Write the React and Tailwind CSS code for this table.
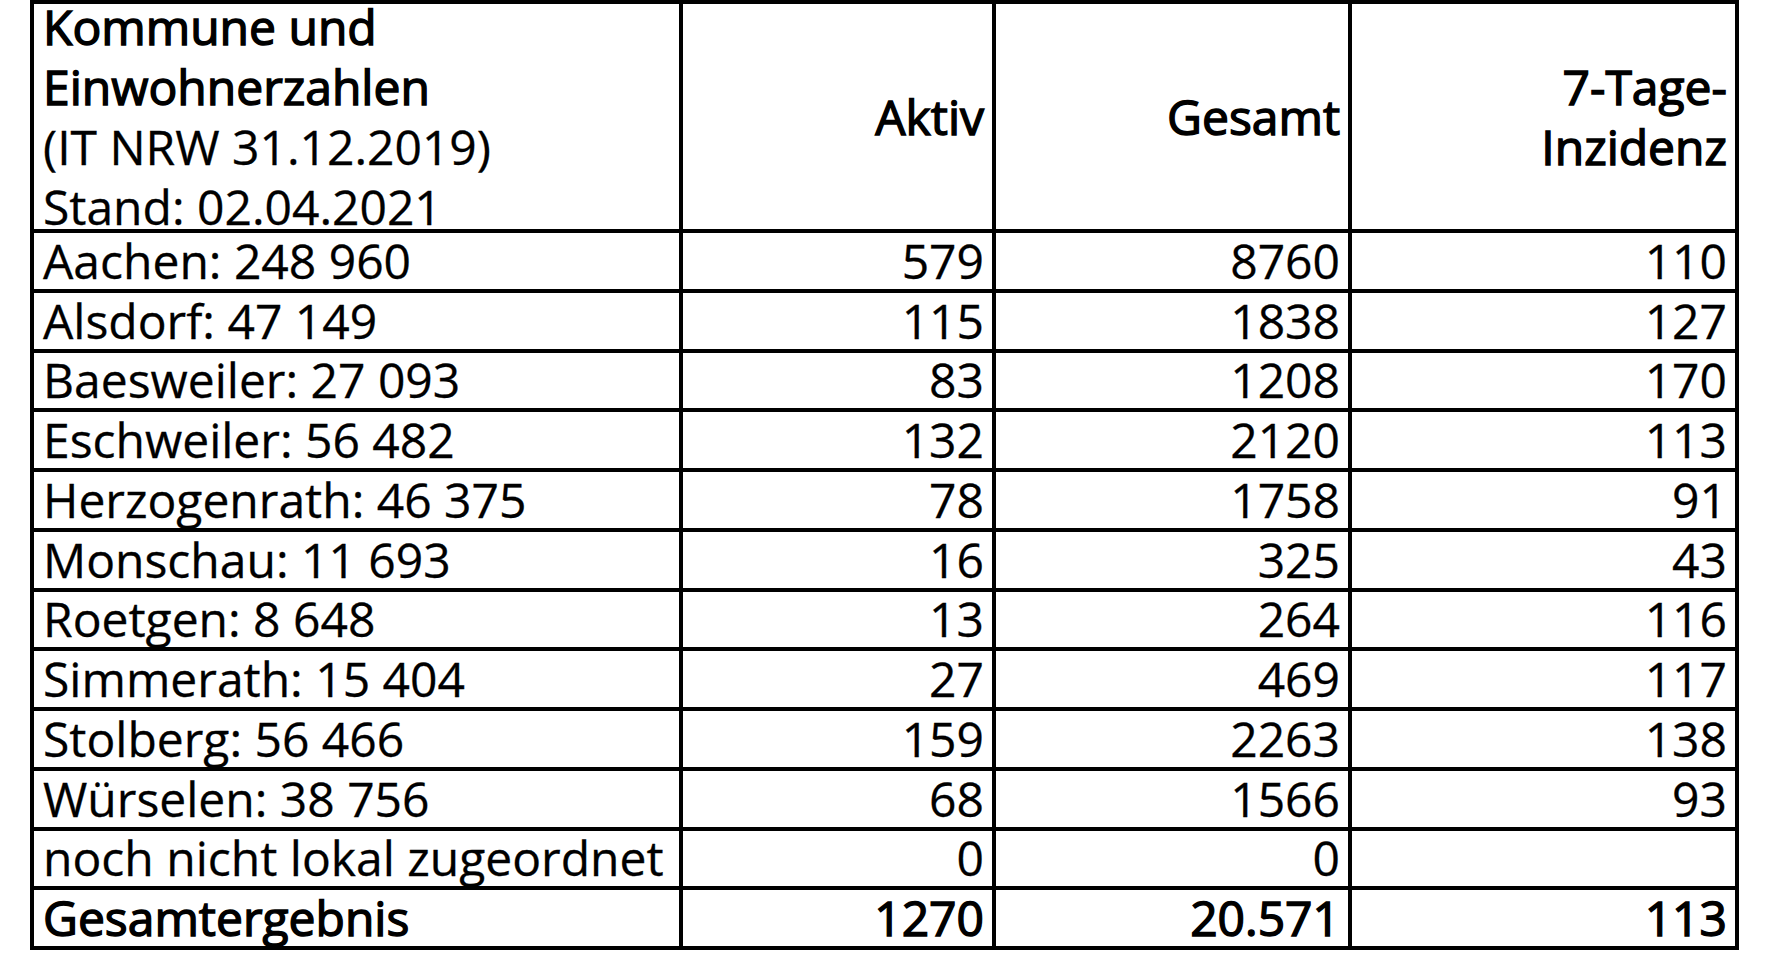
import React from "react";

const rows = [
  ["Aachen: 248 960", "579", "8760", "110"],
  ["Alsdorf: 47 149", "115", "1838", "127"],
  ["Baesweiler: 27 093", "83", "1208", "170"],
  ["Eschweiler: 56 482", "132", "2120", "113"],
  ["Herzogenrath: 46 375", "78", "1758", "91"],
  ["Monschau: 11 693", "16", "325", "43"],
  ["Roetgen: 8 648", "13", "264", "116"],
  ["Simmerath: 15 404", "27", "469", "117"],
  ["Stolberg: 56 466", "159", "2263", "138"],
  ["Würselen: 38 756", "68", "1566", "93"],
  ["noch nicht lokal zugeordnet", "0", "0", ""],
];

const BOLD = "[-webkit-text-stroke:1.4px_black]";
const REG = "[-webkit-text-stroke:0.3px_black]";

function Cell({ children, right, bold }) {
  return (
    <div
      className={
        "bg-white flex items-center whitespace-nowrap leading-[60px] " +
        (right ? "justify-end pr-2 text-right " : "pl-[9px] ") +
        (bold ? BOLD : REG)
      }
    >
      {children}
    </div>
  );
}

export default function App() {
  return (
    <div
      className="min-h-[969px] w-[1779px] bg-white text-black text-[48px]"
      style={{ fontFamily: '"Open Sans", "Noto Sans", sans-serif' }}
    >
      <div className="ml-[30px] grid w-max bg-black p-[4px] gap-[4px] grid-cols-[645px_309px_352px_383px] grid-rows-[225px_repeat(12,55.75px)]">
        <div className="bg-white flex items-center pl-[9px] leading-[60px] whitespace-nowrap">
          <div>
            <div className={BOLD}>Kommune und</div>
            <div className={BOLD}>Einwohnerzahlen</div>
            <div className={REG}>(IT NRW 31.12.2019)</div>
            <div className={REG}>Stand: 02.04.2021</div>
          </div>
        </div>
        <Cell right bold>Aktiv</Cell>
        <Cell right bold>Gesamt</Cell>
        <div className={"bg-white flex items-center justify-end pr-2 text-right leading-[60px] whitespace-nowrap " + BOLD}>
          <div>
            <div>7-Tage-</div>
            <div>Inzidenz</div>
          </div>
        </div>
        {rows.map((r, i) => (
          <React.Fragment key={i}>
            <Cell>{r[0]}</Cell>
            <Cell right>{r[1]}</Cell>
            <Cell right>{r[2]}</Cell>
            <Cell right>{r[3]}</Cell>
          </React.Fragment>
        ))}
        <Cell bold>Gesamtergebnis</Cell>
        <Cell right bold>1270</Cell>
        <Cell right bold>20.571</Cell>
        <Cell right bold>113</Cell>
      </div>
    </div>
  );
}
